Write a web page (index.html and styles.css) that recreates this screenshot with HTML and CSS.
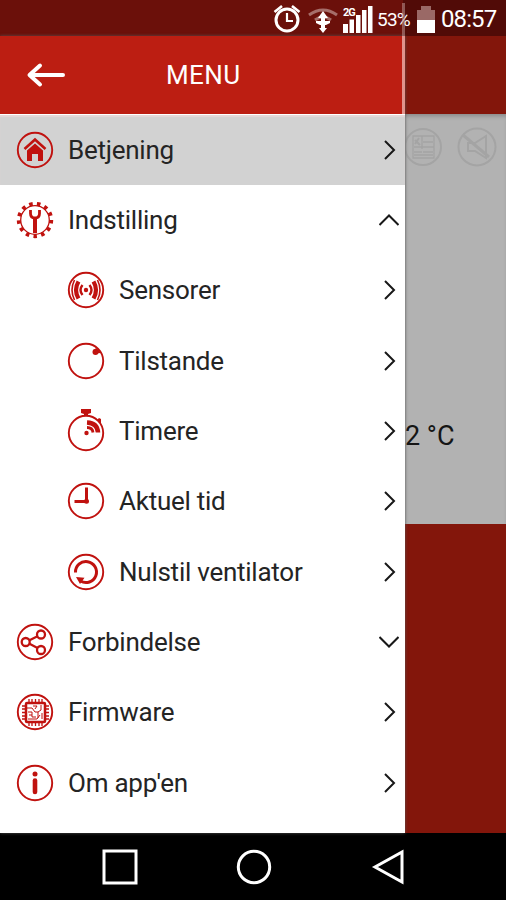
FILE: index.html
```html
<!DOCTYPE html>
<html lang="da">
<head>
<meta charset="utf-8">
<title>Menu</title>
<link rel="stylesheet" href="styles.css">
</head>
<body>
<div class="phone">
  <header class="status">
    <svg class="alarm" width="28" height="32" viewBox="0 0 28 32" fill="none" stroke="#fff"><circle cx="14" cy="18" r="11" stroke-width="3"/><path d="M14 11v8h6" stroke-width="2.200"/><path d="M1.500 10l7.500-6M26.500 10l-7.500-6" stroke-width="2.600"/></svg>
    <svg class="wifi" width="32" height="32" viewBox="0 0 32 32"><path d="M2 13q14-10 28 0M8 18q8-6 16 0" fill="none" stroke="#a66e6a" stroke-width="3"/><path d="M16 9l5 7h-3v3h5v2l-4 2h-1v3h2l-4 5-4-5h2v-3h-1l-4-2v-2h5v-3h-3z" fill="#fff"/></svg>
    <svg class="signal" width="30" height="32" viewBox="0 0 30 32"><path d="M0 22h5v9H0zM6.500 17.500h4.500V31H6.500zM13 13h4.500v18H13zM19 8h4.500v23H19zM25 4h4.500v27H25z" fill="#fff"/><text class="network" x="0" y="14">2G</text></svg>
    <span class="percent">53%</span>
    <svg class="battery" width="18" height="32" viewBox="0 0 18 32"><path d="M0 8h4V4h10v4h4v10H0z" fill="#9a6966"/><path d="M0 18h18v13H0z" fill="#fff"/></svg>
    <span class="clock">08:57</span>
  </header>
  <main class="stage">
    <section class="drawer">
      <div class="titlebar">
        <svg class="back" width="40" height="26" viewBox="0 0 40 26" fill="none" stroke="#fff" stroke-width="4" stroke-linecap="round" stroke-linejoin="round"><path d="M37 13H4M14 3.500L3.500 13 14 22.500"/></svg>
        <h1>MENU</h1>
      </div>
      <nav class="menu">
        <a class="row active">
          <svg class="icon" viewBox="0 0 38 38"><circle class="ring" cx="19" cy="19" r="17.200"/><path class="line" d="M8.500 18L19 8.500 29.500 18" stroke-width="2.600"/><path class="solid" d="M11 19.500l8-7 8 7v10.500h-5v-7h-6v7h-5z"/></svg>
          <span>Betjening</span><svg class="arrow" viewBox="0 0 20 20"><path d="M6 1l9 9-9 9"/></svg>
        </a>
        <a class="row">
          <svg class="icon" viewBox="0 0 38 38"><circle class="line" cx="19" cy="19" r="14.300" stroke-width="1.300"/><circle class="teeth" cx="19" cy="19" r="16.200" pathLength="130"/><path class="line" d="M19 18v14" stroke-width="4"/><path class="line" d="M14.500 9v3.500q0 4.500 4.500 4.500t4.500-4.500V9" stroke-width="2.800"/></svg>
          <span>Indstilling</span><svg class="arrow" viewBox="0 0 20 20"><path d="M0.500 15L10 5.500 19.500 15"/></svg>
        </a>
        <a class="row sub">
          <svg class="icon" viewBox="0 0 38 38"><circle class="ring" cx="19" cy="19" r="17.200"/><circle class="solid" cx="19" cy="19" r="2.200"/><path class="line" d="M15.500 14q-4 5 0 10M22.500 14q4 5 0 10" stroke-width="2.400"/><path class="line" d="M11.500 10.500q-5 8.500 0 17M26.500 10.500q5 8.500 0 17" stroke-width="4.200"/><path class="line" d="M7.500 9q-5 10 0 20M30.500 9q5 10 0 20" stroke-width="1.600"/></svg>
          <span>Sensorer</span><svg class="arrow" viewBox="0 0 20 20"><path d="M6 1l9 9-9 9"/></svg>
        </a>
        <a class="row sub">
          <svg class="icon" viewBox="0 0 38 38"><circle class="ring" cx="19" cy="19" r="17.200"/><path class="solid" d="M28 5.500q5 2.500 5.500 5.500l-4.500.5q-3 1-3-2t3-2z"/><circle class="solid" cx="28.500" cy="10" r="3"/></svg>
          <span>Tilstande</span><svg class="arrow" viewBox="0 0 20 20"><path d="M6 1l9 9-9 9"/></svg>
        </a>
        <a class="row sub">
          <svg class="icon" viewBox="0 0 38 38"><circle class="ring" cx="19" cy="21" r="17.200"/><path class="solid" d="M14-3h10v4l-3 1v2h-4V2l-3-1zM30 8l2-2 2 1v5z"/><circle class="solid" cx="19.500" cy="21" r="2.200"/><path class="line" d="M20 15.500q5.500 0 6 5" stroke-width="2.800"/><path class="line" d="M20 10.500q10.500.5 11 10" stroke-width="4.500"/></svg>
          <span>Timere</span><svg class="arrow" viewBox="0 0 20 20"><path d="M6 1l9 9-9 9"/></svg>
        </a>
        <a class="row sub">
          <svg class="icon" viewBox="0 0 38 38"><circle class="ring" cx="19" cy="19" r="17.200"/><path class="line" d="M19.500 5.500v14H7.500" stroke-width="3"/><circle class="solid" cx="19.500" cy="19.300" r="2.500"/></svg>
          <span>Aktuel tid</span><svg class="arrow" viewBox="0 0 20 20"><path d="M6 1l9 9-9 9"/></svg>
        </a>
        <a class="row sub">
          <svg class="icon" viewBox="0 0 38 38"><circle class="ring" cx="19" cy="19" r="17.200"/><path class="line" d="M8.500 19.500A10.500 10.500 0 1 1 13.500 28" stroke-width="3"/><path class="solid" d="M9 24l8.500.8L13 31z"/></svg>
          <span>Nulstil ventilator</span><svg class="arrow" viewBox="0 0 20 20"><path d="M6 1l9 9-9 9"/></svg>
        </a>
        <a class="row">
          <svg class="icon" viewBox="0 0 38 38"><circle class="ring" cx="19" cy="19" r="17.200"/><g class="line" stroke-width="2.300"><circle cx="9.700" cy="19" r="4"/><circle cx="25" cy="11.500" r="4"/><circle cx="25" cy="27" r="4"/><path d="M13.500 17.200l8-4M13.500 20.800l8 4.200"/></g></svg>
          <span>Forbindelse</span><svg class="arrow" viewBox="0 0 20 20"><path d="M0.500 5L10 14.500 19.500 5"/></svg>
        </a>
        <a class="row">
          <svg class="icon" viewBox="0 0 38 38"><circle class="ring" cx="19" cy="19" r="17.200"/><rect class="line" x="10" y="10" width="19" height="19" rx="1" stroke-width="2.500"/><path class="line" d="M13 6v4M16 6v4M19.500 6v4M23 6v4M26 6v4M13 29v4M16 29v4M19.500 29v4M23 29v4M26 29v4M6 13h4M6 16h4M6 19.500h4M6 23h4M6 26h4M29 13h4M29 16h4M29 19.500h4M29 23h4M29 26h4" stroke-width="1.300"/><path class="line" d="M11 15h5l3 4h3M12 19h4v5h4M17 13h4l-2 3M25 12v5l-3 2v6M12 26h9l3-4M13 22h3M26 20v6" stroke-width="1"/></svg>
          <span>Firmware</span><svg class="arrow" viewBox="0 0 20 20"><path d="M6 1l9 9-9 9"/></svg>
        </a>
        <a class="row">
          <svg class="icon" viewBox="0 0 38 38"><circle class="ring" cx="19" cy="19" r="17.200"/><circle class="solid" cx="19" cy="10" r="2.500"/><path class="line" d="M19 16.500v11.500" stroke-width="4.600" stroke-linecap="round"/></svg>
          <span>Om app'en</span><svg class="arrow" viewBox="0 0 20 20"><path d="M6 1l9 9-9 9"/></svg>
        </a>
      </nav>
    </section>
    <section class="page">
      <div class="page-title"></div>
      <div class="reading">
        <div class="tools">
          <svg width="38" height="40" viewBox="0 0 38 40" fill="none" stroke="#a4a4a4" stroke-width="2"><circle cx="18" cy="20" r="18"/><path d="M8 9h21v22H8zM9 20h20M17 9v13M18 15h10M18 25h10M9 25h8M9 28h19" stroke-width="1.300"/><path d="M10 13l5 5M14 11l-4 6"/></svg>
          <svg width="40" height="40" viewBox="0 0 40 40" fill="none" stroke="#a4a4a4" stroke-width="2"><circle cx="20" cy="20" r="18.500"/><path d="M11 16h7l11-7v22l-11-7h-7z"/><path d="M6 8l26 22" stroke-width="3"/></svg>
        </div>
        <span class="temp">2 °C</span>
      </div>
      <div class="page-bottom"></div>
    </section>
  </main>
  <footer class="keys">
    <svg width="40" height="40" viewBox="0 0 40 40"><rect x="4" y="4" width="32" height="32"/></svg>
    <svg width="40" height="40" viewBox="0 0 40 40"><circle cx="20" cy="20" r="15.700"/></svg>
    <svg width="40" height="40" viewBox="0 0 40 40"><path d="M34 5v30L7 20z"/></svg>
  </footer>
</div>
</body>
</html>
```
FILE: styles.css
```css
* { box-sizing: border-box; }
body { margin: 0; font-family: Roboto, "Liberation Sans", sans-serif; }
.phone { position: relative; width: 506px; height: 900px; display: flex; flex-direction: column; overflow: hidden; background: #000; }
.phone::after { content: ""; position: absolute; z-index: 2; left: 402px; top: 3px; width: 3px; height: 111px; background: linear-gradient(rgba(190, 150, 147, .55) 0 33px, #e0938c 33px); }
.status { height: 36px; flex: none; display: flex; align-items: center; padding-left: 273px; color: #fff; background: linear-gradient(90deg, #6b100a 0 403px, #510b07 403px); }
.status svg { flex: none; display: block; }
.wifi { margin-left: 6px; }
.signal { margin-left: 4px; }
.network { font: bold 11px Roboto, sans-serif; fill: #fff; letter-spacing: -1px; }
.percent { width: 34px; margin-left: 4px; font-size: 19px; letter-spacing: -.8px; white-space: nowrap; padding-top: 2px; }
.battery { margin-left: 6px; }
.clock { margin-left: 6px; font-size: 24px; letter-spacing: -.9px; padding-top: 2px; }
.stage { height: 797px; flex: none; display: flex; }
.drawer { width: 405px; flex: none; background: #fff; box-shadow: 0 0 3px #555; position: relative; z-index: 1; }
.titlebar { height: 78px; display: flex; align-items: center; padding-left: 26px; background: #bc1e12; color: #fff; }
.titlebar h1 { margin: 0 0 0 100px; font-size: 26px; font-weight: 400; letter-spacing: .4px; }
.menu { padding-top: .5px; }
.row { height: 70.350px; display: flex; align-items: center; padding: 0 6px 0 16px; color: #242424; font-size: 26px; font-weight: 400; letter-spacing: -.25px; }
.row.active { background: #d2d2d2; box-shadow: inset 0 2px 1px #e4d8d7; }
.row.sub { padding-left: 67px; }
.row span { flex: 1; margin-left: 14px; white-space: nowrap; }
.icon { width: 38px; height: 38px; flex: none; overflow: visible; }
.ring { fill: none; stroke: #c0120f; stroke-width: 1.900; }
.line { fill: none; stroke: #c0120f; }
.solid { fill: #c0120f; }
.teeth { fill: none; stroke: #c0120f; stroke-width: 4; stroke-dasharray: 4.500 5.500; }
.arrow { width: 20px; height: 20px; flex: none; fill: none; stroke: #181818; stroke-width: 2; }
.page { flex: 1; display: flex; flex-direction: column; background: #83160b; }
.page-title { height: 78px; }
.reading { height: 410px; display: flex; flex-direction: column; justify-content: space-between; padding: 13px 0 70px; background: #b2b2b2; box-shadow: inset 0 4px 4px -2px #888; }
.tools { display: flex; justify-content: space-between; padding-right: 9px; }
.temp { font-size: 27px; line-height: 36px; color: #151515; }
.page-bottom { flex: 1; }
.keys { flex: 1; display: flex; gap: 94px; padding: 14px 0 0 99.500px; background: #000; }
.keys svg { fill: none; stroke: #fff; stroke-width: 3; }
```
